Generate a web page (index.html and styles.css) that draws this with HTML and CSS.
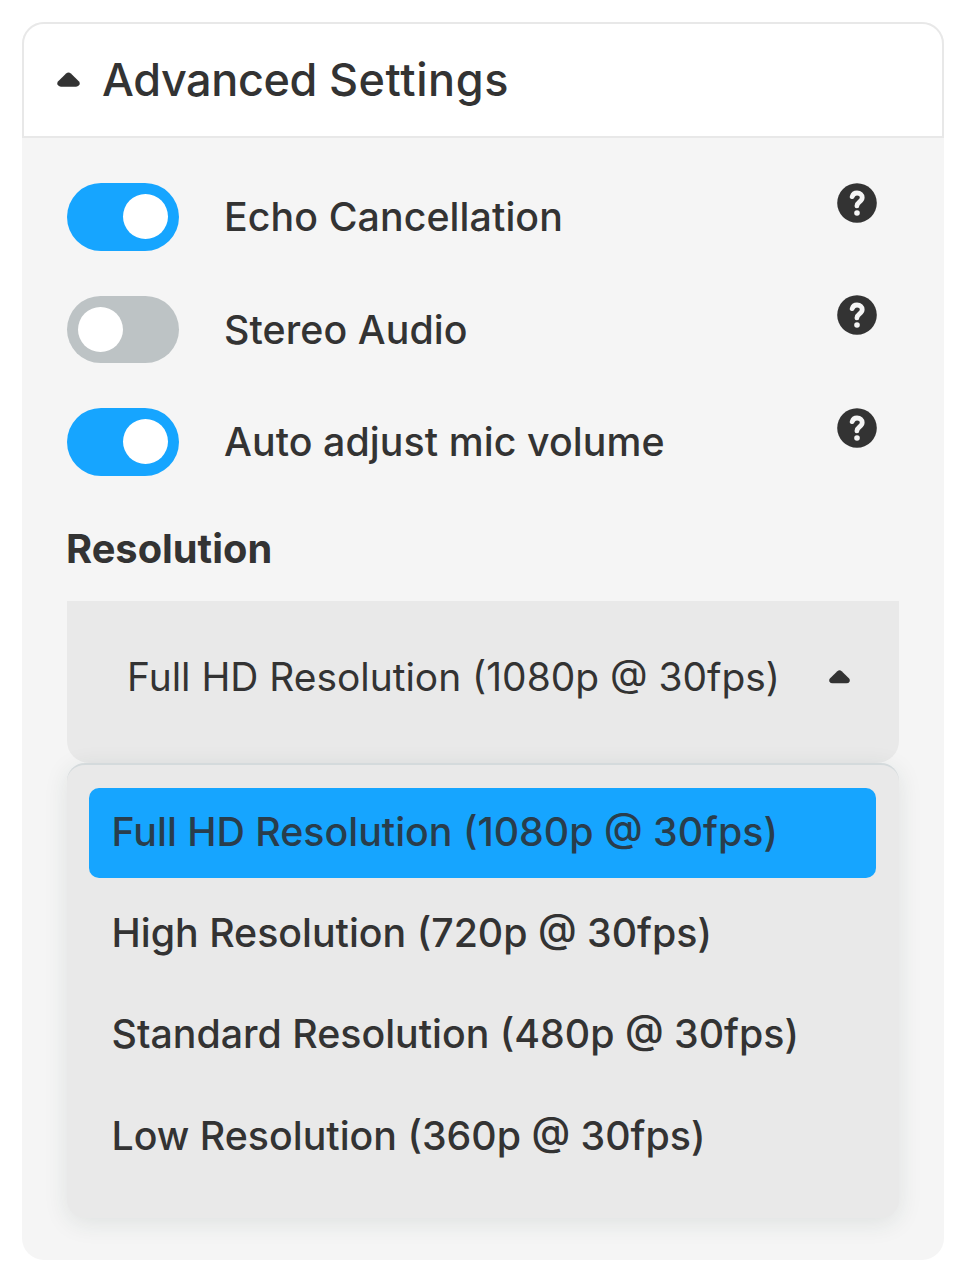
FILE: index.html
```html
<!DOCTYPE html>
<html lang="en">
<head>
<meta charset="utf-8">
<title>Advanced Settings</title>
<link rel="stylesheet" href="styles.css">
</head>
<body>
<section class="panel">
  <header class="panel-header">
    <svg class="caret" viewBox="0 0 24 16"><path d="M9.5 1.4 Q12 -0.6 14.5 1.4 L23 9.8 Q24.2 11.2 23.5 13 Q22.5 15.2 20 15.2 H4 Q1.5 15.2 0.5 13 Q-0.2 11.2 1 9.8Z"/></svg>
    <h1 class="title"><span class="tight">Advanced</span> <span class="loose">Settings</span></h1>
  </header>
  <div class="panel-body">
    <div class="row"><span class="toggle on"></span><span class="label">Echo Cancellation</span>
      <svg class="help" viewBox="0 0 40 40"><circle cx="20" cy="20" r="19.8"/><path d="M15.2 13.6C16 11 17.6 10 20 10c3.2 0 5.2 1.8 5.2 4.5 0 4.4-5.3 4.3-5.3 8.4"/><circle class="dot" cx="20" cy="30" r="2.8"/></svg></div>
    <div class="row"><span class="toggle"></span><span class="label">Stereo Audio</span>
      <svg class="help" viewBox="0 0 40 40"><circle cx="20" cy="20" r="19.8"/><path d="M15.2 13.6C16 11 17.6 10 20 10c3.2 0 5.2 1.8 5.2 4.5 0 4.4-5.3 4.3-5.3 8.4"/><circle class="dot" cx="20" cy="30" r="2.8"/></svg></div>
    <div class="row"><span class="toggle on"></span><span class="label">Auto adjust mic volume</span>
      <svg class="help" viewBox="0 0 40 40"><circle cx="20" cy="20" r="19.8"/><path d="M15.2 13.6C16 11 17.6 10 20 10c3.2 0 5.2 1.8 5.2 4.5 0 4.4-5.3 4.3-5.3 8.4"/><circle class="dot" cx="20" cy="30" r="2.8"/></svg></div>
    <h2 class="subtitle">Resolution</h2>
    <div class="select"><span class="value">Full HD Resolution (1080p @ 30fps)</span>
      <svg class="caret small" viewBox="0 0 24 16"><path d="M9.5 1.4 Q12 -0.6 14.5 1.4 L23 9.8 Q24.2 11.2 23.5 13 Q22.5 15.2 20 15.2 H4 Q1.5 15.2 0.5 13 Q-0.2 11.2 1 9.8Z"/></svg></div>
    <ul class="menu">
      <li class="option selected"><span>Full HD Resolution (1080p @ 30fps)</span></li>
      <li class="option"><span>High Resolution (720p @ 30fps)</span></li>
      <li class="option"><span>Standard Resolution (480p @ 30fps)</span></li>
      <li class="option"><span>Low Resolution (360p @ 30fps)</span></li>
    </ul>
  </div>
</section>
</body>
</html>
```
FILE: styles.css
```css
* { box-sizing: border-box; }
body { margin: 0; padding: 22px 20px 20px 22px; background: #fff; color: #333; font-family: Inter, "Liberation Sans", sans-serif; }
.panel { height: 1238px; border-radius: 22px; background: #f5f5f5; }
.panel-header { display: flex; align-items: center; height: 116px; padding: 0 0 1px 33px; background: #fff; border: 2px solid #e8e8e8; border-radius: 22px 22px 0 0; }
.caret { width: 23px; height: 15.5px; margin-right: 22px; fill: #333; }
.title { margin: 0; font-size: 45px; font-weight: 460; white-space: nowrap; }
.tight { letter-spacing: -0.4px; }
.loose { letter-spacing: 0.6px; }
.panel-body { padding: 45px 45px 0; }
.row { display: flex; align-items: flex-start; height: 67.5px; margin-bottom: 45px; }
.toggle { width: 112px; height: 67.5px; padding: 11.3px 11px; border-radius: 34px; background: #bdc3c5; }
.toggle::before { content: ""; display: block; width: 45px; height: 45px; border-radius: 50%; background: #fff; }
.toggle.on { background: #16a5ff; }
.toggle.on::before { margin-left: 45px; }
.label { margin-left: 45px; line-height: 67.5px; font-size: 39.3px; font-weight: 480; letter-spacing: 0.08px; white-space: nowrap; }
.help { width: 40px; height: 40px; margin: -0.5px 22px 0 auto; fill: #333; }
.help path { fill: none; stroke: #f5f5f5; stroke-width: 4.8; stroke-linecap: round; stroke-linejoin: round; }
.help .dot { fill: #f5f5f5; }
.subtitle { margin: 0 0 25.3px -1px; padding-top: 1.5px; line-height: 54px; font-size: 39.8px; font-weight: 700; }
.select { display: flex; align-items: center; height: 161.5px; padding: 0 49px 11px 60px; background: #e9e9e9; border-radius: 0 0 22px 22px; }
.value { font-size: 38.9px; font-weight: 400; white-space: nowrap; }
.caret.small { width: 21px; height: 14px; margin: 0 0 0 auto; }
.menu { height: 455px; margin: 0; padding: 23px 23px 23px 22px; list-style: none; background: #e9e9e9; border-top: 2px solid #d4dadc; border-radius: 18px; box-shadow: 0 5px 24px rgba(34, 54, 49, 0.1); }
.option { height: 90px; margin-bottom: 11.3px; padding-left: 22.5px; border-radius: 10px; line-height: 88px; font-size: 39.3px; font-weight: 480; white-space: nowrap; }
.option.selected { background: #16a5ff; color: #293d4c; }
```
